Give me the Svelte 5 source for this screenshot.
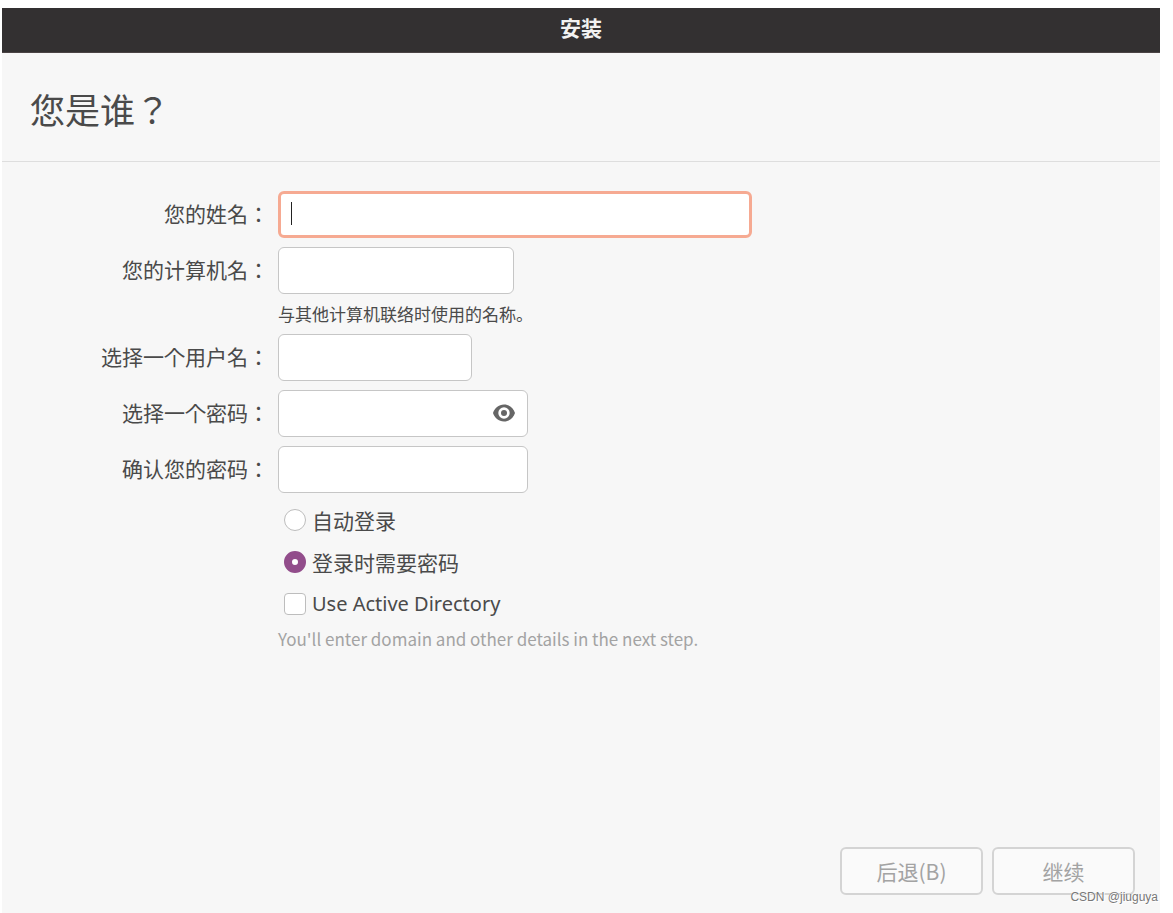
<script>
    let name = $state("");
    let hostname = $state("");
    let username = $state("");
    let password = $state("");
    let confirmation = $state("");
    let login = $state("password");
    let activeDirectory = $state(false);
    let visible = $state(false);

    let ready = $derived(name && hostname && username && password && password === confirmation);
</script>

<div id="window">
    <header>安装</header>
    <h1>您是谁？</h1>

    <form id="user-form">
        <div class="row">
            <label for="name">您的姓名：</label>
            <div class="field wide">
                <input type="text" id="name" class="active" bind:value={name}>
                {#if !name}<span class="caret"></span>{/if}
            </div>
        </div>
        <div class="row">
            <label for="hostname">您的计算机名：</label>
            <div class="field host">
                <input type="text" id="hostname" bind:value={hostname}>
            </div>
        </div>
        <p class="note">与其他计算机联络时使用的名称。</p>
        <div class="row">
            <label for="username">选择一个用户名：</label>
            <div class="field user">
                <input type="text" id="username" bind:value={username}>
            </div>
        </div>
        <div class="row">
            <label for="password">选择一个密码：</label>
            <div class="field">
                <input type={visible ? "text" : "password"} id="password" bind:value={password}>
                <button type="button" class="eye" aria-label="显示密码" onclick={() => visible = !visible}>
                    <svg viewBox="0 0 22 18" width="22" height="18">
                        <path fill="#666" fill-rule="evenodd" d="M11 .5C5.600 .5 1.500 4.200 0 9c1.500 4.800 5.600 8.500 11 8.500s9.500-3.700 11-8.500C20.500 4.200 16.400 .5 11 .5zM11 3.300a5.700 5.700 0 1 1 0 11.400a5.700 5.700 0 0 1 0-11.400z"/>
                        <circle cx="11" cy="9" r="3" fill="#666"/>
                    </svg>
                </button>
            </div>
        </div>
        <div class="row">
            <label for="confirmation">确认您的密码：</label>
            <div class="field">
                <input type="password" id="confirmation" bind:value={confirmation}>
            </div>
        </div>

        <div class="options">
            <label><input type="radio" name="login" value="auto" bind:group={login}>自动登录</label>
            <label><input type="radio" name="login" value="password" bind:group={login}>登录时需要密码</label>
            <label class="latin"><input type="checkbox" bind:checked={activeDirectory}>Use Active Directory</label>
        </div>
        <p class="detail">You'll enter domain and other details in the next step.</p>
    </form>

    <footer>
        <button type="button" disabled>后退(B)</button>
        <button type="submit" form="user-form" disabled={!ready}>继续</button>
    </footer>
    <span class="watermark">CSDN @jiuguya</span>
</div>

<style>
:global(body) {
    background: #fff;
}

#window {
    position: relative;
    display: flex;
    flex-direction: column;
    box-sizing: border-box;
    min-height: calc(100vh - 8px);
    margin: 8px 13px 0 2px;
    background: #f7f7f7;
    color: #4a4a4a;
    font: 21px/32px "Noto Sans CJK JP", sans-serif;
}

header {
    height: 45px;
    border-bottom: 1px solid #4b4445;
    box-sizing: border-box;
    background: #333031;
    color: #f2f2f2;
    font-weight: bold;
    line-height: 38px;
    text-align: center;
}

h1 {
    margin: 0;
    padding: 32px 28px 28px;
    border-bottom: 1px solid #dedede;
    font-size: 35px;
    font-weight: normal;
    line-height: 48px;
}

#user-form {
    flex: 1;
    padding-top: 29px;
}

.row {
    display: grid;
    grid-template-columns: 267px 1fr;
    column-gap: 9px;
    align-items: center;
    margin-bottom: 9px;
}

.row label {
    padding-bottom: 3px;
    text-align: right;
}

.field {
    position: relative;
    width: 250px;
    height: 47px;
}

.wide {
    width: 474px;
}

.host {
    width: 236px;
}

.user {
    width: 194px;
}

.field input {
    width: 100%;
    height: 100%;
    padding: 0 12px;
    border: 1px solid #c6c6c6;
    border-radius: 6px;
    box-sizing: border-box;
    background: #fff;
    color: inherit;
    font: inherit;
    outline: none;
}

.field input.active,
.field input:focus {
    border: 3px solid #f6aa92;
}

.caret {
    position: absolute;
    top: 11px;
    left: 13px;
    width: 1px;
    height: 23px;
    background: #222;
    pointer-events: none;
}

.eye {
    position: absolute;
    top: 14px;
    right: 13px;
    display: flex;
    padding: 0;
    border: 0;
    background: none;
}

.note,
.detail {
    margin: 0 0 0 276px;
    font-size: 17px;
    line-height: 22px;
}

.note {
    margin-bottom: 9px;
}

.options {
    display: flex;
    flex-direction: column;
    align-items: flex-start;
    gap: 10px;
    margin: 11px 0 0 282px;
}

.options label {
    display: flex;
    align-items: center;
    gap: 6px;
}

.options input {
    width: 22px;
    height: 22px;
    margin: 0;
    border: 1px solid #bdbdbd;
    border-radius: 4px;
    background: #fff;
    appearance: none;
}

.options input[type="radio"] {
    border-radius: 50%;
}

.options input[type="radio"]:checked {
    border: 8px solid #924d8b;
}

.options input[type="checkbox"]:checked {
    border: 6px solid #924d8b;
}

.options .latin {
    font-family: "Noto Sans", sans-serif;
    font-size: 20px;
}

.detail {
    margin-top: 8px;
    color: #a3a3a3;
}

footer {
    display: flex;
    justify-content: flex-end;
    gap: 9px;
    padding: 0 25px 18px;
}

footer button {
    width: 143px;
    height: 48px;
    padding: 0;
    border: 2px solid #d4d4d4;
    border-radius: 6px;
    background: #fafafa;
    color: #4a4a4a;
    font: inherit;
}

footer button:disabled {
    color: #a3a3a3;
}

.watermark {
    position: absolute;
    right: 2px;
    bottom: 8px;
    color: #777;
    font: 12px/16px "Liberation Sans", sans-serif;
    text-shadow: 0 0 1px #fff, 1px 1px 0 #fff;
}
</style>
